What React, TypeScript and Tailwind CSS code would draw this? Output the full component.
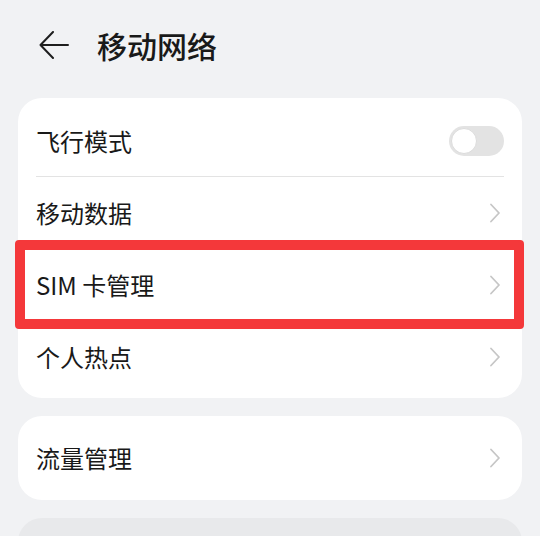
import React from "react";

const font = { fontFamily: '"Noto Sans CJK SC", "Noto Sans", sans-serif' };

function Chevron() {
  return (
    <svg width="12" height="20" viewBox="0 0 12 20" className="mr-[3px]">
      <path d="M2 1.5 L10 10 L2 18.5" fill="none" stroke="#c6c6c6" strokeWidth="1.8" strokeLinecap="round" strokeLinejoin="round" />
    </svg>
  );
}

function Row({ label, children }: { label: string; children?: React.ReactNode }) {
  return (
    <div className="relative flex h-[72px] items-center justify-between px-[18px]">
      <span className="text-[24px] leading-none text-[#191919]">{label}</span>
      {children ?? <Chevron />}
    </div>
  );
}

export default function App() {
  return (
    <div className="w-[540px] h-[536px] overflow-hidden bg-[#f1f2f4]" style={font}>
      <div className="flex h-[90px] items-center pl-[39px]">
        <svg width="30" height="28" viewBox="0 0 30 28">
          <path d="M14 1 L1.5 14 L14 27 M1.5 14 H29" fill="none" stroke="#1e1e1e" strokeWidth="2" strokeLinecap="round" strokeLinejoin="round" />
        </svg>
        <span className="ml-[28px] text-[30px] leading-none font-medium text-[#191919]">移动网络</span>
      </div>

      <div className="mx-[18px] mt-[8px] rounded-[24px] bg-white pt-[7px] pb-[5px]">
        <div className="flex h-[71px] items-center justify-between px-[18px]">
          <span className="text-[24px] leading-none text-[#191919]">飞行模式</span>
          <div className="flex h-[30px] w-[55px] items-center rounded-full bg-[#e3e3e3] px-[2px]">
            <div className="h-[26px] w-[26px] rounded-full border-[1.5px] border-[#dcdcdc] bg-white" />
          </div>
        </div>
        <div className="mx-[18px] h-px bg-[#e3e3e3]" />
        <Row label="移动数据" />
        <Row label="SIM 卡管理">
          <>
            <Chevron />
            <div className="pointer-events-none absolute -left-[3px] -right-[2px] -top-[9px] -bottom-[8px] rounded-[4px] border-[10px] border-[#f4383a]" />
          </>
        </Row>
        <Row label="个人热点" />
      </div>

      <div className="mx-[18px] mt-[18px] rounded-[24px] bg-white py-[6px]">
        <Row label="流量管理" />
      </div>

      <div className="mx-[18px] mt-[18px] h-[80px] rounded-[24px] bg-[#e8e9eb]" />
    </div>
  );
}
